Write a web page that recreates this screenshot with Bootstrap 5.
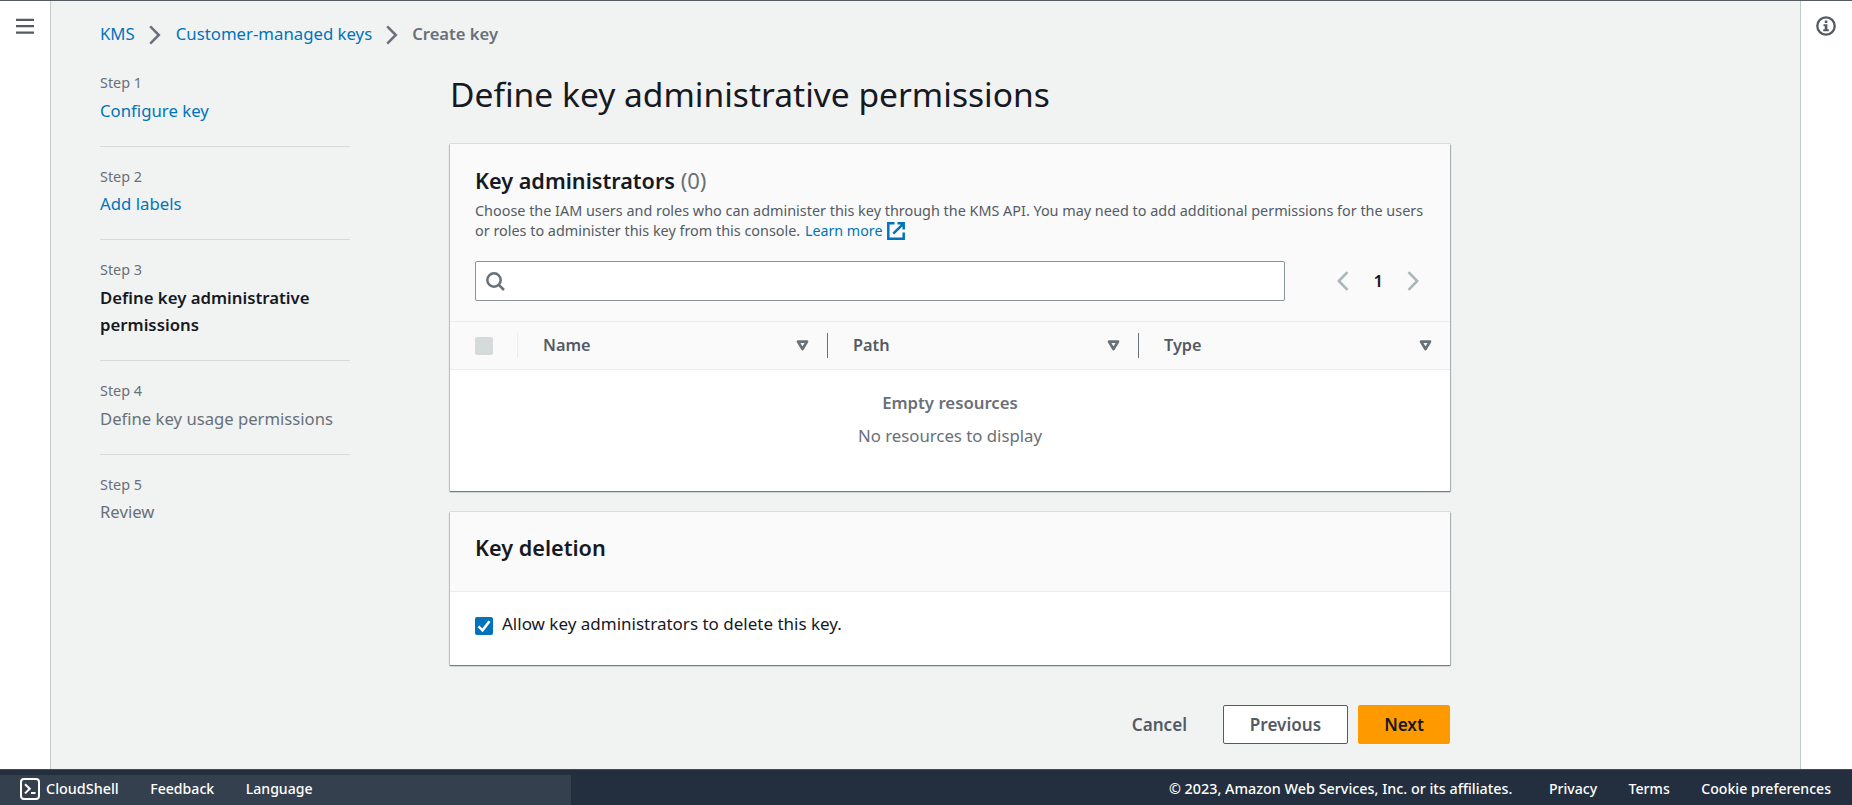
<!DOCTYPE html>
<html lang="en">
<head>
<meta charset="utf-8">
<meta name="viewport" content="width=device-width, initial-scale=1">
<title>Create key | KMS</title>
<link rel="stylesheet" href="https://cdn.jsdelivr.net/npm/bootstrap@5.3.0/dist/css/bootstrap.min.css">
<style>
  body { font-family: "Noto Sans", sans-serif; font-size: 16.75px; line-height: 27.5px; color: #16191f; background: #f1f3f3; overflow: hidden; }
  a { color: #0073bb; text-decoration: none; }
  svg { display: block; flex: none; }
  .fw-semibold { font-weight: 600 !important; }
  .shell { border-top: 1px solid #545b64; }
  .rail { background: #fff; flex: none; }
  .rail-left { width: 51px; border-right: 1px solid #c2cacb; padding: 17px 0 0 16px; }
  .rail-right { width: 52px; border-left: 1px solid #c2cacb; padding: 15px 0 0 15px; }
  .page-main { padding: 19px 0 0 49px; }
  .crumbs { height: 28px; }
  .crumbs svg { margin: 2px 15px 0 14px; }
  .crumbs svg:last-of-type { margin-right: 14px; }
  .crumb-now { font-size: 16.6px; }
  .crumb-now, .muted-text { color: #687078; }
  .steps { width: 250px; margin-right: 100px; padding-top: 21px; flex: none; }
  .step-item { padding-bottom: 21.5px; margin-bottom: 16.1px; border-bottom: 1px solid #d5dbdb; }
  .step-item:last-child { border: 0; }
  .step-item .muted-text { font-size: 16.66px; }
  .step-no { font-size: 14.4px; color: #687078; }
  .content { width: 1000px; flex: none; }
  .page-title { font-size: 33.55px; line-height: 45px; font-weight: 400; margin: 24px 0 27px; }
  .panel { background: #fff; margin-bottom: 21px; box-shadow: 0 0 1px #8b9799, 0 1px 1px #6f7e80, 0 -1px 0 #e8ebeb, 1px 1px 1px rgba(0,28,36,.22), -1px 1px 1px rgba(0,28,36,.12); }
  .panel-head { background: #fafafa; border-bottom: 1px solid #eaeded; padding: 22px 25px 20px; }
  .panel-title { font-size: 21.65px; line-height: 28px; font-weight: 600; margin: 0; }
  .panel-title span { font-size: 22px; }
  .panel-desc { font-size: 14.4px; line-height: 20px; color: #545b64; margin: 6px 0 0; white-space: nowrap; }
  .panel-desc a { font-size: 14.25px; margin-left: 1px; gap: 5px; }
  .search-box { width: 810px; height: 40px; border: 1px solid #879596; border-radius: 2px; background: #fff; padding-left: 10px; }
  .pager { margin-right: 6px; }
  .col-heads { height: 48px; background: #fafafa; border-bottom: 1px solid #eaeded; color: #545b64; font-size: 16.3px; }
  .pick-cell { width: 68px; height: 25px; padding-left: 25px; border-right: 1px solid #eaeded; }
  .data-cell { width: 311px; height: 25px; padding: 0 18px 0 25px; border-right: 1px solid #687078; }
  .pick-cell + .data-cell { width: 310px; }
  .data-cell:last-child { border: 0; flex: 1; }
  .box-off { width: 18px; height: 18px; border-radius: 2px; background: #d5dbdb; }
  .empty-state { height: 121px; padding-top: 19px; }
  .empty-head { margin-bottom: 5px; }
  .deletion-head { height: 80px; }
  .deletion-body { height: 73px; padding: 19px 25px 0; }
  .form-check-label { font-size: 17px; line-height: 26px; }
  .box-on { width: 18px; height: 18px; border-radius: 2px; background: #0073bb; margin: 6px 9px 0 0; }
  .actions { margin-top: 40px; gap: 10px; }
  .act { height: 39px; padding: 0; border-radius: 2px; font-size: 17.1px; font-weight: 600; line-height: 35px; }
  .act-plain { width: 125px; color: #545b64; border: 1px solid #545b64; background: #fff; }
  .act-plain:hover { color: #16191f; border-color: #16191f; }
  .act-cancel { color: #545b64; margin-right: 26px; border: 0; }
  .act-next { width: 92px; background: #ff9900; color: #16191f; border: 1px solid #ff9900; }
  .foot { height: 36px; background: #232f3e; border-top: 1px solid #414b57; flex: none; color: #fff; font-size: 14.35px; font-weight: 500; line-height: 20px; }
  .foot a { color: #fff; font-size: 14.1px; }
  .foot-left { width: 571px; height: 30px; background: #35404e; padding: 0 0 2px 20px; gap: 31.5px; }
  .foot-left a:first-child { gap: 6px; font-size: 14.4px; }
  .foot-right { height: 30px; padding: 0 21px 2px 0; gap: 31.5px; }
  .foot-right span { margin-right: 5px; }
</style>
</head>
<body>
<div class="vh-100 d-flex flex-column">
  <div class="shell d-flex flex-grow-1">
    <nav class="rail rail-left">
      <svg width="18" height="17" viewBox="0 0 18 17"><path d="M0 1.9h18M0 8.2h18M0 14.6h18" stroke="#545b64" stroke-width="2.3"/></svg>
    </nav>

    <main class="page-main flex-grow-1">
      <nav class="crumbs d-flex align-items-center">
        <a href="#">KMS</a>
        <svg width="12" height="20" viewBox="0 0 12 20"><path d="M1.2 1.4 9.8 10 1.2 18.6" fill="none" stroke="#687078" stroke-width="2.5"/></svg>
        <a href="#">Customer-managed keys</a>
        <svg width="12" height="20" viewBox="0 0 12 20"><path d="M1.2 1.4 9.8 10 1.2 18.6" fill="none" stroke="#687078" stroke-width="2.5"/></svg>
        <span class="crumb-now fw-semibold">Create key</span>
      </nav>

      <div class="d-flex">
        <aside class="steps">
          <div class="step-item"><div class="step-no">Step 1</div><a href="#">Configure key</a></div>
          <div class="step-item"><div class="step-no">Step 2</div><a href="#">Add labels</a></div>
          <div class="step-item"><div class="step-no">Step 3</div><div class="fw-semibold">Define key administrative permissions</div></div>
          <div class="step-item"><div class="step-no">Step 4</div><div class="muted-text">Define key usage permissions</div></div>
          <div class="step-item"><div class="step-no">Step 5</div><div class="muted-text">Review</div></div>
        </aside>

        <div class="content">
          <h1 class="page-title">Define key administrative permissions</h1>

          <section class="panel">
            <div class="panel-head">
              <h2 class="panel-title">Key administrators <span class="muted-text fw-normal">(0)</span></h2>
              <div class="panel-desc">Choose the IAM users and roles who can administer this key through the KMS API. You may need to add additional permissions for the users
                <div class="d-flex align-items-center">or roles to administer this key from this console.&nbsp;<a href="#" class="d-flex align-items-center">Learn more
                  <svg width="18" height="18" viewBox="0 0 18 18"><path d="M7.5 1.3H1.3v15.4h15.4v-6.2M10.5 1.3h6.2v6.2M16.2 1.8 6.3 11.7" fill="none" stroke="#0073bb" stroke-width="2.5"/></svg></a></div>
              </div>
              <div class="d-flex align-items-center justify-content-between mt-3 pt-1">
                <div class="search-box d-flex align-items-center">
                  <svg width="19" height="19" viewBox="0 0 19 19"><circle cx="8" cy="8" r="6.7" fill="none" stroke="#687078" stroke-width="2.5"/><path d="m12.8 12.8 5.2 5.2" stroke="#687078" stroke-width="2.6"/></svg>
                </div>
                <div class="pager d-flex align-items-center">
                  <svg width="12" height="20" viewBox="0 0 12 20"><path d="M10.5 1.2 1.8 10l8.7 8.8" fill="none" stroke="#aab7b8" stroke-width="2.6"/></svg>
                  <span class="fw-semibold px-4">1</span>
                  <svg width="12" height="20" viewBox="0 0 12 20"><path d="M1.5 1.2 10.2 10l-8.7 8.8" fill="none" stroke="#aab7b8" stroke-width="2.6"/></svg>
                </div>
              </div>
            </div>
            <div class="col-heads d-flex align-items-center fw-semibold">
              <div class="pick-cell d-flex align-items-center"><span class="box-off"></span></div>
              <div class="data-cell d-flex align-items-center justify-content-between">Name
                <svg width="13" height="11" viewBox="0 0 13 11"><path d="M2 1.6h9L6.5 9z" fill="none" stroke="#687078" stroke-width="2.7" stroke-linejoin="round"/></svg></div>
              <div class="data-cell d-flex align-items-center justify-content-between">Path
                <svg width="13" height="11" viewBox="0 0 13 11"><path d="M2 1.6h9L6.5 9z" fill="none" stroke="#687078" stroke-width="2.7" stroke-linejoin="round"/></svg></div>
              <div class="data-cell d-flex align-items-center justify-content-between">Type
                <svg width="13" height="11" viewBox="0 0 13 11"><path d="M2 1.6h9L6.5 9z" fill="none" stroke="#687078" stroke-width="2.7" stroke-linejoin="round"/></svg></div>
            </div>
            <div class="empty-state text-center muted-text">
              <div class="empty-head fw-semibold">Empty resources</div>
              <div>No resources to display</div>
            </div>
          </section>

          <section class="panel">
            <div class="panel-head deletion-head">
              <h2 class="panel-title">Key deletion</h2>
            </div>
            <div class="deletion-body d-flex align-items-start">
              <span class="box-on"><svg width="18" height="18" viewBox="0 0 18 18"><path d="m3.5 9.3 4 4 7-9" fill="none" stroke="#fff" stroke-width="2.6"/></svg></span>
              <span class="form-check-label">Allow key administrators to delete this key.</span>
            </div>
          </section>

          <div class="actions d-flex justify-content-end align-items-center">
            <button class="btn act act-cancel" type="button">Cancel</button>
            <button class="btn act act-plain" type="button">Previous</button>
            <button class="btn act act-next" type="button">Next</button>
          </div>
        </div>
      </div>
    </main>

    <aside class="rail rail-right">
      <svg width="20" height="20" viewBox="0 0 20 20"><circle cx="10" cy="10" r="8.7" fill="none" stroke="#545b64" stroke-width="2.3"/><path d="M8.8 4.5h2.6V7H8.8zM7.5 8.3h3.9v5h1.4v1.9H7.2v-1.9h1.5V10H7.5z" fill="#545b64"/></svg>
    </aside>
  </div>

  <footer class="foot d-flex justify-content-between align-items-end">
    <div class="foot-left d-flex align-items-center">
      <a class="d-flex align-items-center" href="#">
        <svg width="20" height="22" viewBox="0 0 20 22"><rect x="1" y="1" width="18" height="20" rx="3" fill="none" stroke="#fff" stroke-width="2"/><path d="m5 6.2 4.8 4.6L5 15.4M11 15h4.5" fill="none" stroke="#fff" stroke-width="2"/></svg>
        CloudShell</a>
      <a href="#">Feedback</a>
      <a href="#">Language</a>
    </div>
    <div class="foot-right d-flex align-items-center">
      <span>© 2023, Amazon Web Services, Inc. or its affiliates.</span>
      <a href="#">Privacy</a>
      <a href="#">Terms</a>
      <a href="#">Cookie preferences</a>
    </div>
  </footer>
</div>
<script src="https://cdn.jsdelivr.net/npm/bootstrap@5.3.0/dist/js/bootstrap.bundle.min.js"></script>
</body>
</html>
